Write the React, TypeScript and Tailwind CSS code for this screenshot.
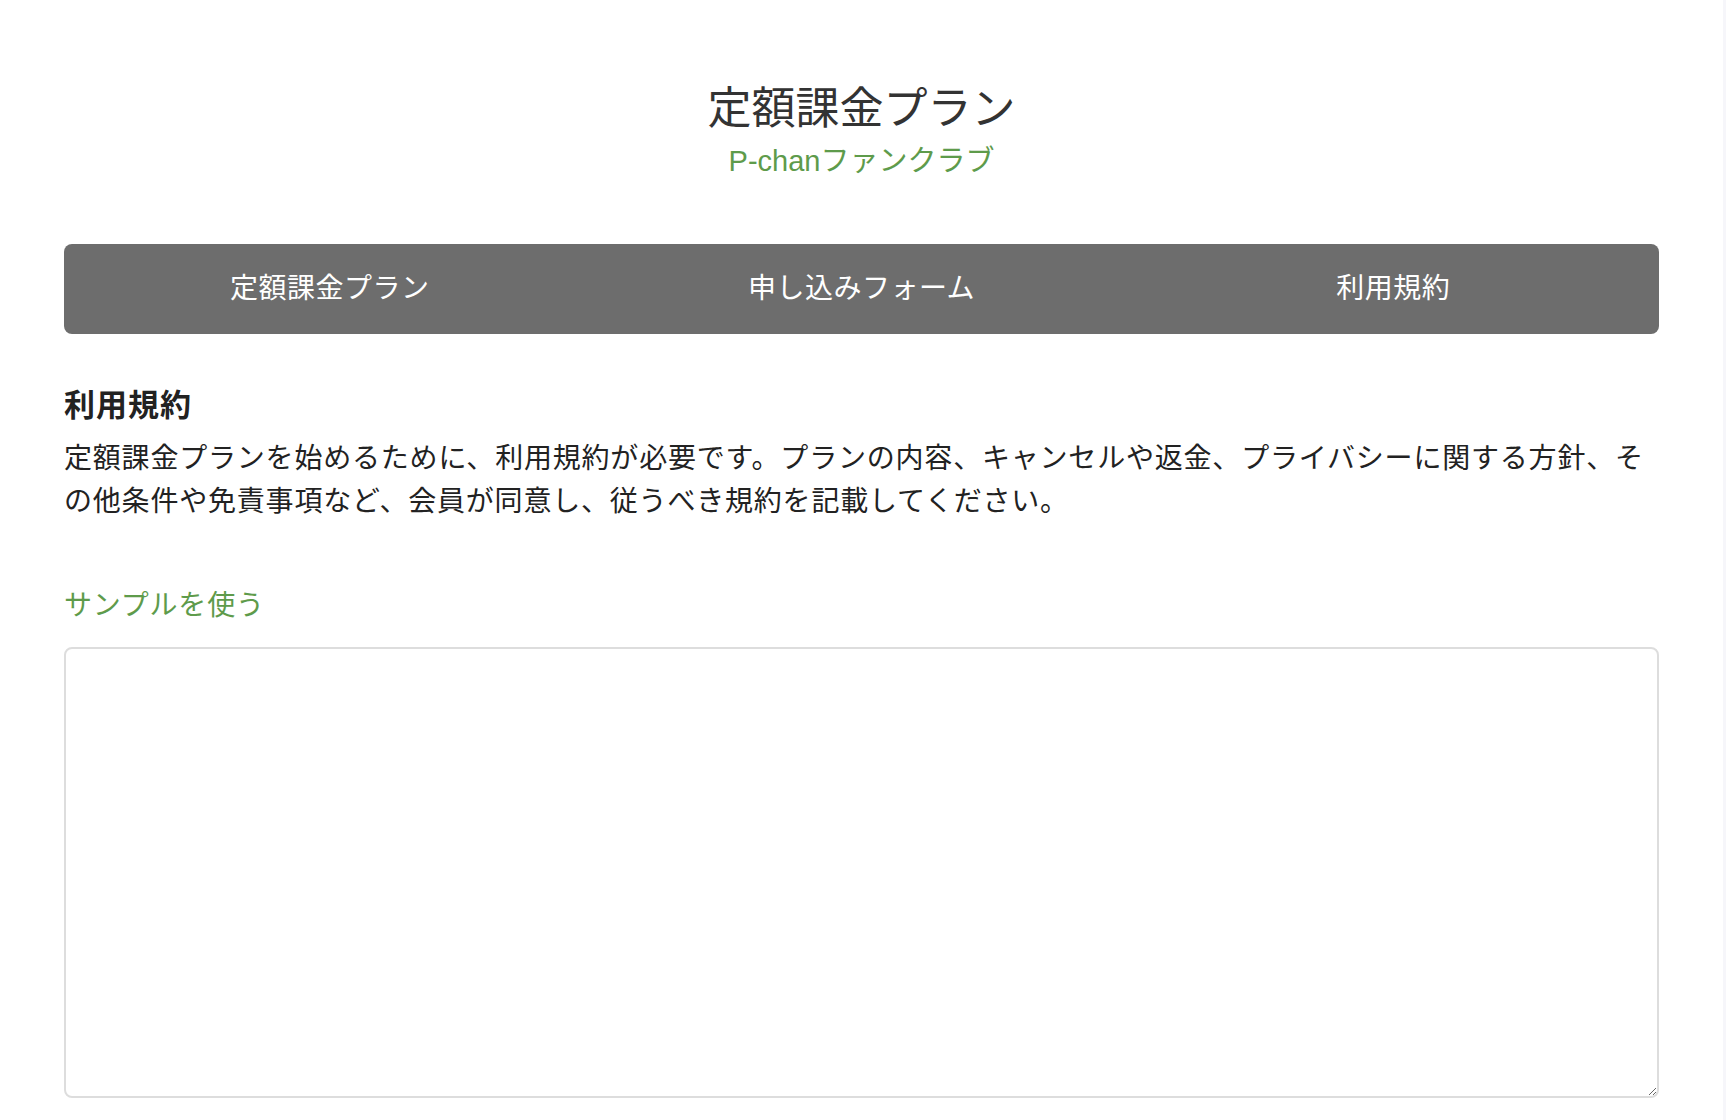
import { useState } from "react";

const tabs = ["定額課金プラン", "申し込みフォーム", "利用規約"];

export default function App() {
  const [terms, setTerms] = useState("");

  return (
    <div
      className="min-h-screen bg-white border-r-[3px] border-[#f6f6fa] px-16 text-[#222]"
      style={{ fontFamily: '"Liberation Sans", "Noto Sans CJK JP", sans-serif' }}
    >
      {/* Header */}
      <div className="pt-[84px] flex flex-col items-center">
        <h1 className="text-[44px] leading-[50px] text-[#333]">定額課金プラン</h1>
        <div className="mt-[2px] text-[29px] leading-[50px] text-[#5e9b4b]">
          P-chanファンクラブ
        </div>
      </div>

      {/* Tabs */}
      <nav className="mt-[58px] grid grid-cols-3 h-[90px] rounded-lg bg-[#6d6d6d]">
        {tabs.map((t) => (
          <button
            key={t}
            type="button"
            className="flex items-center justify-center text-[28px] tracking-[0.5px] text-white"
          >
            {t}
          </button>
        ))}
      </nav>

      {/* Terms */}
      <section className="mt-[50px]">
        <h2 className="text-[31px] leading-[44px] font-bold tracking-[1px]">利用規約</h2>
        <p className="mt-[9px] text-[28px] leading-[43px] tracking-[0.8px]">
          定額課金プランを始めるために、利用規約が必要です。プランの内容、キャンセルや返金、プライバシーに関する方針、その他条件や免責事項など、会員が同意し、従うべき規約を記載してください。
        </p>

        <button
          type="button"
          className="mt-[61px] block text-[28px] leading-[44px] tracking-[0.8px] text-[#5e9b4b]"
        >
          サンプルを使う
        </button>

        <textarea
          value={terms}
          onChange={(e) => setTerms(e.target.value)}
          className="mt-[19px] block w-full h-[451px] rounded-lg border-2 border-[#dddddd] p-4 text-[28px] outline-none"
        />
      </section>
    </div>
  );
}
